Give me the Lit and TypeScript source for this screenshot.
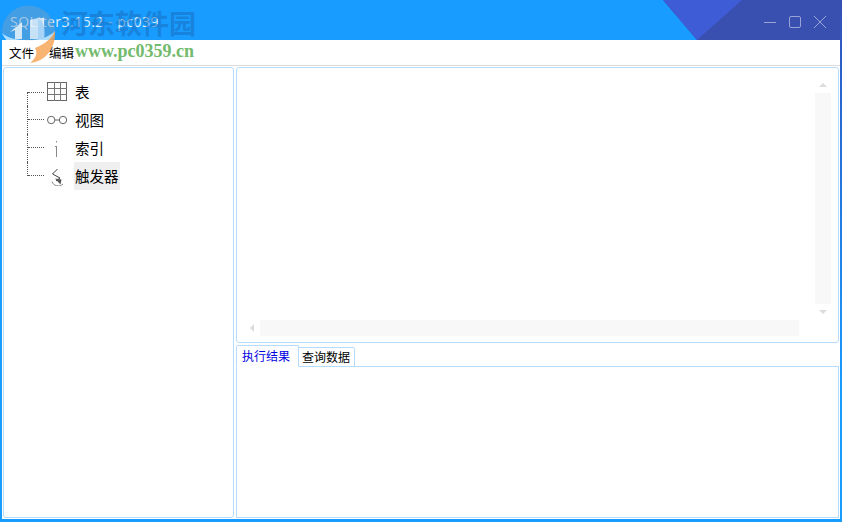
import { LitElement, html, css, svg } from 'lit';
import { customElement } from 'lit/decorators.js';

const ICONS = {
  table: svg`<rect x="0.5" y="0.5" width="19" height="18" fill="none" stroke="#666"/>
    <path d="M0 6.5H20M0 12.5H20M7.5 0V19M13.5 0V19" stroke="#777" fill="none"/>`,
  view: svg`<circle cx="4.2" cy="10" r="3.7" fill="none" stroke="#666"/>
    <circle cx="16" cy="10" r="3.7" fill="none" stroke="#666"/>
    <path d="M8 10H12.5" stroke="#666"/>`,
  index: svg`<path d="M9.5 3V4.5M8 8.5H10M9.5 8V19" stroke="#888" fill="none"/>`,
  trigger: svg`<path d="M10.500 3L5.500 8L13 12L9 15" stroke="#444" fill="none"/>
    <path d="M8 12.500L14.500 13.500L13.500 18.500Z" fill="#555"/>
    <path d="M5 15.500C6 20 13 21.500 16 18" stroke="#888" fill="none"/>`,
};

const TREE = [
  { icon: ICONS.table, label: '表' },
  { icon: ICONS.view, label: '视图' },
  { icon: ICONS.index, label: '索引' },
  { icon: ICONS.trigger, label: '触发器', selected: true },
];

@customElement('app-root')
export class AppRoot extends LitElement {
  static styles = css`
    :host {
      display: block;
      width: 842px;
      height: 522px;
      overflow: hidden;
      font-family: 'Noto Sans CJK SC', 'Liberation Sans', sans-serif;
      font-size: 14.5px;
      color: #000;
    }

    .window {
      position: relative;
      display: flex;
      width: 842px;
      height: 522px;
      background: #189cff;
    }

    .body {
      flex: 1;
      display: flex;
      flex-direction: column;
      min-width: 0;
      padding-left: 2px;
      padding-bottom: 3px;
    }

    .edge {
      width: 2px;
      background: linear-gradient(#3550b4, #2a62cc 15%, #189cff 75%);
    }

    .titlebar {
      position: relative;
      height: 40px;
      margin-left: -2px;
      display: flex;
      align-items: center;
      justify-content: flex-end;
      padding-left: 10px;
      box-sizing: border-box;
    }

    .titlebar .title {
      flex: 1;
      color: #fff;
      font-family: 'Open Sans', 'Liberation Sans', sans-serif;
      font-size: 14px;
      letter-spacing: 0.5px;
      opacity: 0.85;
      padding-top: 3px;
    }

    .corner {
      position: absolute;
      top: 0;
      right: 0;
      width: 180px;
      height: 40px;
    }

    .controls {
      position: relative;
      display: flex;
      align-items: center;
      gap: 13px;
      padding: 4px 14px 0 0;
    }

    .controls svg {
      display: block;
      width: 12px;
      height: 12px;
    }

    .menu {
      height: 25px;
      background: #fff;
      border-bottom: 1px solid #dcdcdc;
      display: flex;
      align-items: center;
      gap: 15px;
      padding-left: 7px;
      font-size: 12.5px;
    }

    .content {
      flex: 1;
      display: flex;
      gap: 2px;
      background: #fff;
      padding: 1px;
      min-height: 0;
    }

    .panel {
      border: 1px solid #b5dcff;
      border-radius: 3px;
      background: #fff;
      box-sizing: border-box;
    }

    .tree {
      width: 231px;
      padding: 10px 0 0 23px;
    }

    .row {
      display: flex;
      align-items: center;
      height: 28px;
    }

    .link {
      width: 17px;
      height: 28px;
      margin-right: 3px;
      border-left: 1px dotted #555;
      box-sizing: border-box;
    }

    .row:first-child .link {
      height: 14px;
      margin-top: 14px;
    }

    .row:last-child .link {
      height: 14px;
      margin-bottom: 14px;
    }

    .link i {
      display: block;
      height: 14px;
      border-bottom: 1px dotted #555;
      box-sizing: border-box;
    }

    .row:first-child .link i {
      height: 1px;
    }

    .row svg {
      display: block;
      width: 20px;
      height: 20px;
      margin-right: 7px;
    }

    .row span {
      padding: 0 1px;
      height: 28px;
      line-height: 27px;
    }

    .row span.selected {
      background: #efefef;
    }

    .right {
      flex: 1;
      display: flex;
      flex-direction: column;
      min-width: 0;
    }

    .editor {
      height: 276px;
      display: grid;
      grid-template-columns: 1fr 16px;
      grid-template-rows: 1fr 16px;
      padding: 15px 7px 6px 11px;
    }

    .vbar {
      display: flex;
      flex-direction: column;
      align-items: center;
      gap: 6px;
      padding-bottom: 6px;
    }

    .vbar .track {
      flex: 1;
      width: 16px;
      background: #f8f8f8;
    }

    .hbar {
      display: flex;
      align-items: center;
      gap: 6px;
      margin-right: 16px;
      padding-left: 2px;
    }

    .hbar .track {
      flex: 1;
      height: 16px;
      background: #f8f8f8;
    }

    .arrow {
      width: 0;
      height: 0;
      border-style: solid;
      border-color: transparent;
    }

    .arrow.up {
      border-width: 0 4px 4px;
      border-bottom-color: #dcdcdc;
    }

    .arrow.down {
      border-width: 4px 4px 0;
      border-top-color: #dcdcdc;
    }

    .arrow.left {
      border-width: 4px 4px 4px 0;
      border-right-color: #dcdcdc;
    }

    .tabs {
      display: flex;
      align-items: flex-end;
      height: 24px;
      margin-bottom: -1px;
      font-size: 12px;
      position: relative;
    }

    .tab {
      height: 20px;
      line-height: 18px;
      padding: 0 4px 0 3px;
      border: 1px solid #b5dcff;
      border-left: none;
      border-radius: 0 2px 0 0;
      box-sizing: border-box;
      white-space: nowrap;
    }

    .tab.active {
      height: 22px;
      line-height: 19px;
      padding: 0 8px 0 5px;
      border-left: 1px solid #b5dcff;
      border-bottom-color: #fff;
      border-radius: 2px 2px 0 0;
      color: #0000e0;
      background: #fff;
    }

    .output {
      flex: 1;
      border: 1px solid #b5dcff;
      border-radius: 0;
    }

    /* site watermark stamped over the screenshot */
    .mark-logo {
      position: absolute;
      left: 2px;
      top: 5px;
      width: 58px;
      height: 58px;
    }

    .mark-name {
      position: absolute;
      left: 61px;
      top: 3px;
      font-size: 27px;
      font-weight: 700;
      white-space: nowrap;
      color: rgba(24, 110, 190, 0.55);
    }

    .mark-url {
      position: absolute;
      left: 75px;
      top: 41px;
      font-family: 'Liberation Serif', serif;
      font-size: 18px;
      font-weight: 700;
      white-space: nowrap;
      color: #72ba6c;
    }
  `;

  render() {
    return html`
      <div class="window">
        <div class="body">
          <div class="titlebar">
            <div class="title">SQLiter3.15.2 - pc039</div>
            <svg class="corner" viewBox="0 0 180 40">
              <polygon points="3,0 37,40 180,40 180,0" fill="#3a50b0" />
              <polygon points="3,0 37,40 82,0" fill="#3d5cd6" />
            </svg>
            <div class="controls">
              <svg viewBox="0 0 12 12"><path d="M0 6.5H12" stroke="#98a4d8" /></svg>
              <svg viewBox="0 0 12 12"><rect x="0.5" y="0.5" width="11" height="11" rx="1.5" fill="none" stroke="#98a4d8" /></svg>
              <svg viewBox="0 0 12 12"><path d="M0 0L12 12M12 0L0 12" stroke="#98a4d8" /></svg>
            </div>
          </div>
          <div class="menu"><span>文件</span><span>编辑</span></div>
          <div class="content">
            <div class="panel tree">
              ${TREE.map(
                (item) => html`
                  <div class="row">
                    <div class="link"><i></i></div>
                    <svg viewBox="0 0 20 20">${item.icon}</svg>
                    <span class=${item.selected ? 'selected' : ''}>${item.label}</span>
                  </div>
                `
              )}
            </div>
            <div class="right">
              <div class="panel editor">
                <div></div>
                <div class="vbar">
                  <div class="arrow up"></div>
                  <div class="track"></div>
                  <div class="arrow down"></div>
                </div>
                <div class="hbar">
                  <div class="arrow left"></div>
                  <div class="track"></div>
                </div>
                <div></div>
              </div>
              <div class="tabs">
                <div class="tab active">执行结果</div>
                <div class="tab">查询数据</div>
              </div>
              <div class="output"></div>
            </div>
          </div>
        </div>
        <div class="edge"></div>
        <svg class="mark-logo" viewBox="0 0 58 58">
          <path d="M0 28A26.500 26.500 0 0 1 53 26C46 36 22 40 0 28Z" fill="#6f9fc8" opacity="0.5" />
          <path d="M0 28C12 38 42 38 53 26C52 32 48 37 36 42C20 46 6 42 0 28Z" fill="#fff" opacity="0.65" />
          <path d="M28 58C45 56 54 42 53 26C49 34 43 39 33 43C36 48 34 53 28 58Z" fill="#f5a14f" opacity="0.8" />
          <path d="M8 27L20 17V34H13V25Z" fill="#fff" opacity="0.75" />
          <path d="M28 15L36 13H42V34H28Z" fill="#fff" opacity="0.7" />
          <path d="M36 13C42 17 44 26 42 34H36Z" fill="#9fd0f5" opacity="0.8" />
        </svg>
        <div class="mark-name">河东软件园</div>
        <div class="mark-url">www.pc0359.cn</div>
      </div>
    `;
  }
}
